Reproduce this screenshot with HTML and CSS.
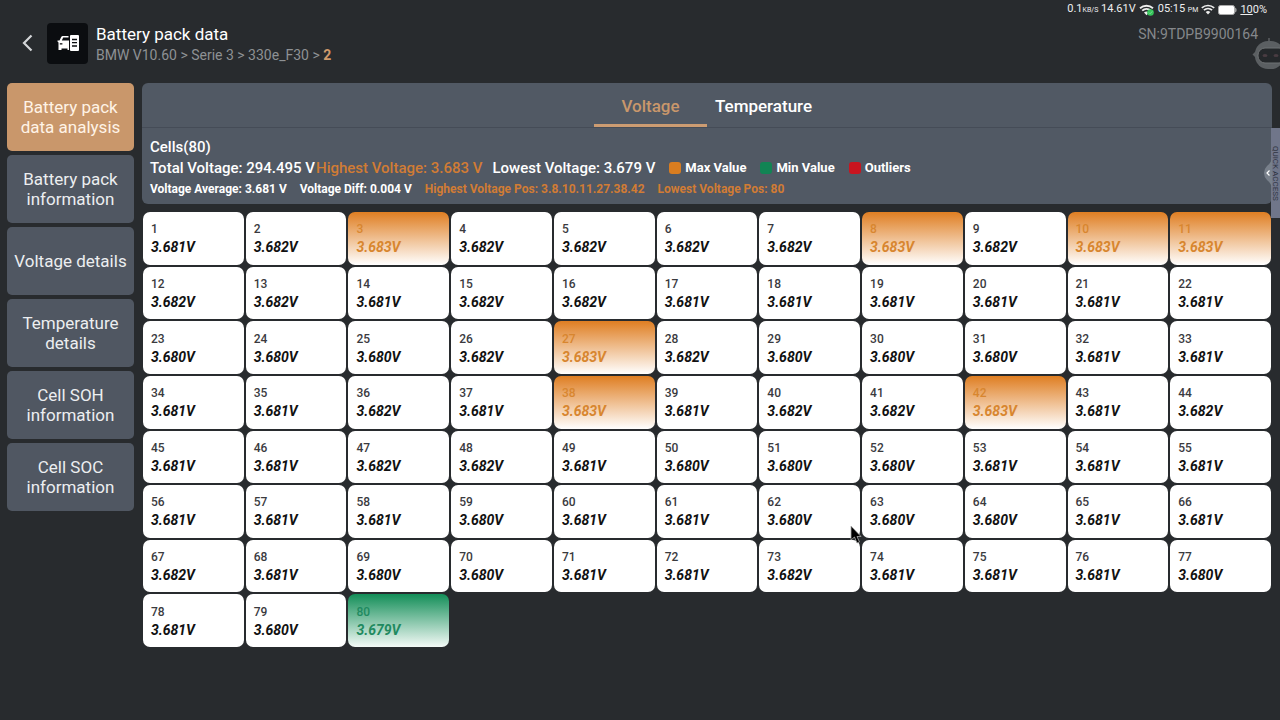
FILE: index.html
```
<!DOCTYPE html>
<html lang="en">
<head>
<meta charset="utf-8">
<title>Battery pack data</title>
<link rel="stylesheet" href="styles.css">
</head>
<body>
<div class="app">
  <div class="status">
    <span>0.1<small>KB/S</small> 14.61V</span>
    <svg viewBox="0 0 16 12" width="16" height="12" aria-hidden="true">
      <path d="M1 4.200a10 10 0 0 1 13 0M3.200 6.600a6.600 6.600 0 0 1 8.600 0" fill="none" stroke="#eee" stroke-width="1.900"/>
      <path d="M5 8.400a4 4 0 0 1 5 0L7.500 11.200z" fill="#eee"/>
      <circle cx="11.500" cy="8.500" r="3.300" fill="#35c45a"/>
      <path d="M9.800 8.500l1.300 1.300 2.200-2.500" fill="none" stroke="#7fe39a" stroke-width="0.900"/>
    </svg>
    <span>05:15 <small>PM</small></span>
    <svg viewBox="0 0 14 11" width="14" height="11" aria-hidden="true">
      <path d="M0.800 3.800a9.500 9.500 0 0 1 12.400 0M2.900 6.100a6.200 6.200 0 0 1 8.200 0" fill="none" stroke="#eee" stroke-width="1.700"/>
      <path d="M4.700 8a3.700 3.700 0 0 1 4.600 0L7 10.600z" fill="#eee"/>
    </svg>
    <svg viewBox="0 0 19 10" width="19" height="10" aria-hidden="true">
      <rect x="0.500" y="0.500" width="16" height="9" rx="2" fill="#fff" stroke="#aaa"/>
      <path d="M17.300 2.500q1.200 0.500 1.200 2.500t-1.200 2.500z" fill="#ccc"/>
    </svg>
    <span><u>10</u>0%</span>
  </div>

  <header class="header">
    <button class="back" aria-label="Back">
      <svg viewBox="0 0 12 18" width="12" height="18"><path d="M10.500 1.500L3 9l7.500 7.500" fill="none" stroke="#d4d6d8" stroke-width="2.200"/></svg>
    </button>
    <div class="logo">
      <svg viewBox="0 0 22 16" width="22" height="16" aria-hidden="true">
        <path d="M2.500 5.500L4.200 2Q4.700 1 5.700 1H11.500V2.400H6.200L4.800 5.500H12V15H10.500V13.500H4.500V15H1.500V7.500L0.500 6.500V5.500z" fill="#fff"/>
        <path d="M2.800 8.200h2.600v1.300H2.800z" fill="#0b0d10"/>
        <rect x="13" y="0" width="9" height="16" rx="1" fill="#fff"/>
        <path d="M15 4.500h5M15 7.700h5M15 11h5" stroke="#0b0d10" stroke-width="1.300"/>
      </svg>
    </div>
    <div class="heading">
      <h1>Battery pack data</h1>
      <p>BMW V10.60 &gt; Serie 3 &gt; 330e_F30 &gt; <b>2</b></p>
    </div>
    <div class="serial">SN:9TDPB9900164</div>
  </header>

  <div class="body">
    <nav class="side">
      <button class="side-item active">Battery pack data analysis</button>
      <button class="side-item">Battery pack information</button>
      <button class="side-item">Voltage details</button>
      <button class="side-item">Temperature details</button>
      <button class="side-item">Cell SOH information</button>
      <button class="side-item">Cell SOC information</button>
    </nav>

    <main class="main">
      <section class="panel">
        <div class="tabs" role="tablist">
          <button class="tab active" role="tab" aria-selected="true">Voltage</button>
          <button class="tab" role="tab" aria-selected="false">Temperature</button>
        </div>
        <div class="summary">
          <div class="line">Cells(80)</div>
          <div class="line totals">
            <span>Total Voltage: 294.495 V</span>
            <span class="high">Highest Voltage: 3.683 V</span>
            <span class="lowest">Lowest Voltage: 3.679 V</span>
            <span class="legend"><i class="swatch max"></i>Max Value</span>
            <span class="legend"><i class="swatch min"></i>Min Value</span>
            <span class="legend"><i class="swatch out"></i>Outliers</span>
          </div>
          <div class="line details">
            <span>Voltage Average: 3.681 V</span>
            <span>Voltage Diff: 0.004 V</span>
            <span class="high">Highest Voltage Pos: 3.8.10.11.27.38.42</span>
            <span class="high">Lowest Voltage Pos: 80</span>
          </div>
        </div>
      </section>
      <ol class="cells" id="cells"></ol>
    </main>
  </div>

  <svg class="robot" viewBox="0 0 30 34" width="30" height="34" aria-hidden="true">
    <path d="M17 1v6" stroke="#5d6063" stroke-width="1.500"/>
    <path d="M4 14l-3.500 3.500L4 21z" fill="#5d6063"/>
    <rect x="3" y="4" width="29" height="28" rx="13" fill="#5b5f62"/>
    <rect x="6" y="11" width="28" height="15" rx="7" fill="#25282b" stroke="#6f7274"/>
    <ellipse cx="13" cy="18.500" rx="2.500" ry="1.500" fill="#493c42"/>
    <ellipse cx="24" cy="18.500" rx="2.500" ry="1.500" fill="#493c42"/>
  </svg>

  <button class="quick">
    <svg class="quick-handle" viewBox="0 0 9 32" width="9" height="32" aria-hidden="true">
      <path d="M9 0Q9 5 4 9Q1 12 1 16T4 23Q9 27 9 32z" fill="#78808b"/>
      <path d="M6.500 13.500L4 16l2.500 2.500" fill="none" stroke="#fff" stroke-width="1.200"/>
    </svg>
    <span>QUICK ACCESS</span>
  </button>

  <svg class="cursor" viewBox="0 0 12 20" width="12" height="20" aria-hidden="true">
    <path d="M1 1v14l3.500-3 2.500 6 2.500-1-2.500-5.500H11z" fill="#000" stroke="#aaa" stroke-width="0.800"/>
  </svg>
</div>
<script src="cells.js"></script>
</body>
</html>
```
FILE: styles.css
```
* { box-sizing: border-box; }
body {
  margin: 0;
  background: #282b2e;
  color: #fff;
  font-family: Roboto, "Liberation Sans", sans-serif;
}
button {
  margin: 0;
  padding: 0;
  border: 0;
  background: none;
  color: inherit;
  font: inherit;
}
h1, p, ol { margin: 0; padding: 0; font-weight: 400; }
svg { display: block; }

.app {
  position: relative;
  display: flex;
  flex-direction: column;
  min-height: 100vh;
  overflow: hidden;
  padding-bottom: 73px;
}

.status {
  display: flex;
  justify-content: flex-end;
  align-items: center;
  gap: 3px;
  height: 19px;
  padding-right: 13px;
  font-size: 11px;
  line-height: 19px;
  color: #eee;
}
.status small { font-size: 7px; }

.header {
  display: flex;
  align-items: center;
  height: 48px;
  padding: 0 22px 0 21px;
}
.back { display: flex; margin-right: 14px; }
.logo {
  display: flex;
  align-items: center;
  justify-content: center;
  width: 41px;
  height: 41px;
  border-radius: 4px;
  background: #0b0d10;
}
.heading { margin-left: 8px; padding-top: 3px; }
.heading h1 { font-size: 17px; line-height: 21px; }
.heading p { font-size: 14px; line-height: 21px; color: #8e9194; }
.heading b { color: #cf9a6b; }
.serial {
  align-self: flex-start;
  margin-left: auto;
  padding-top: 5px;
  font-size: 14px;
  line-height: 20px;
  color: #85888b;
}

.body {
  flex: 1;
  display: flex;
  gap: 8px;
  padding: 16px 8px 0 7px;
}
.side {
  display: flex;
  flex-direction: column;
  gap: 4px;
  width: 127px;
}
.side-item {
  height: 68px;
  padding: 0 4px;
  border-radius: 5px;
  background: #505762;
  font-size: 17px;
  line-height: 20px;
  color: #eceef0;
}
.side-item.active { background: #c9976b; color: #fff3e6; }
.side-item:not(:nth-child(3)) { padding: 0 12px; }

.main {
  flex: 1;
  display: flex;
  flex-direction: column;
  gap: 8px;
}
.panel { border-radius: 6px; background: #515964; }
.tabs {
  display: flex;
  justify-content: center;
  height: 45px;
  border-bottom: 1px solid #454c57;
}
.tab {
  width: 113px;
  padding-top: 4px;
  border-bottom: 3px solid transparent;
  font-size: 17px;
  font-weight: 500;
}
.tab.active { border-color: #cc9c72; color: #c9976b; }
.summary { padding: 9px 8px 5px; font-weight: 500; }
.line { font-size: 15px; line-height: 20px; white-space: nowrap; }
.totals { display: flex; line-height: 22px; }
.high { color: #d17c34; }
.totals .high { margin-left: 1px; }
.lowest { margin-left: 10px; }
.legend {
  display: flex;
  align-items: center;
  margin-left: 14px;
  font-size: 13px;
  font-weight: 700;
}
.swatch { width: 12px; height: 12px; margin-right: 4px; border-radius: 3px; }
.max { background: #d97d20; }
.min { background: #118454; }
.out { background: #c9141f; }
.details { display: flex; gap: 13px; font-size: 12px; font-weight: 700; }

.cells {
  flex: 1;
  display: grid;
  grid-template-columns: repeat(11, 1fr);
  grid-template-rows: repeat(8, 1fr);
  gap: 2px;
  padding: 0 1px;
  list-style: none;
}
.cell {
  display: flex;
  flex-direction: column;
  justify-content: center;
  padding: 1px 8px 0;
  border-radius: 7px;
  background: #fff;
  color: #111;
}
.cell span { font-size: 12px; font-weight: 500; line-height: 17px; color: #3a3a3e; }
.cell em { font-size: 14px; font-weight: 700; line-height: 18px; }
.cell.highest { background: linear-gradient(#df7e22, #fff); }
.cell.highest span, .cell.highest em { color: #d8862f; }
.cell.minimum { background: linear-gradient(#138e58, #f4faf7); }
.cell.minimum span, .cell.minimum em { color: #1f8a60; }

.robot { position: absolute; top: 37px; right: -2px; }
.quick {
  position: absolute;
  top: 128px;
  right: 0;
  display: flex;
  align-items: center;
  justify-content: center;
  width: 9px;
  height: 90px;
  background: #70768a;
}
.quick span {
  writing-mode: vertical-rl;
  font-size: 8px;
  line-height: 9px;
  white-space: nowrap;
  color: #2f3442;
}
.quick-handle { position: absolute; right: 8px; top: 29px; }
.cursor { position: absolute; left: 850px; top: 525px; }
```
FILE: cells.js
```
const rows = [
  "681 682 683 682 682 682 682 683 682 683 683",
  "682 682 681 682 682 681 681 681 681 681 681",
  "680 680 680 682 683 682 680 680 680 681 681",
  "681 681 682 681 683 681 682 682 683 681 682",
  "681 681 682 682 681 680 680 680 681 681 681",
  "681 681 681 680 681 681 680 680 680 681 681",
  "682 681 680 680 681 681 682 681 681 681 680",
  "681 680 679"
];
const list = document.getElementById("cells");
rows.join(" ").split(" ").forEach((mv, i) => {
  const li = document.createElement("li");
  li.className = "cell" + (mv === "683" ? " highest" : mv === "679" ? " minimum" : "");
  li.innerHTML = `<span>${i + 1}</span><em>3.${mv}V</em>`;
  list.append(li);
});
```
